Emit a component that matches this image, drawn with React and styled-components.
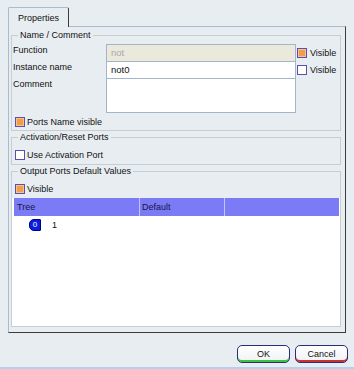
import React from "react";
import styled, { createGlobalStyle } from "styled-components";

const GlobalStyle = createGlobalStyle`
  html, body {
    margin: 0;
    padding: 0;
    background: #e8edf1;
  }
  body {
    font-family: "Liberation Sans", Arial, sans-serif;
    font-size: 9px;
    color: #111;
  }
  * {
    box-sizing: border-box;
  }
`;

const Window = styled.div`
  width: 354px;
  height: 369px;
  display: flex;
  flex-direction: column;
  background: #e8edf1;
  border-bottom: 2px solid #b5d0ee;
`;

const TabBar = styled.div`
  display: flex;
  padding: 7px 0 0 8px;
`;

const Tab = styled.div`
  position: relative;
  z-index: 1;
  width: 61px;
  height: 20px;
  margin-bottom: -1px;
  border: 1px solid #a9bccf;
  border-right-color: #3c3c3c;
  border-bottom: none;
  border-radius: 2px 2px 0 0;
  background: #e8edf1;
  display: flex;
  align-items: center;
  justify-content: center;
  padding-top: 1px;
`;

const Panel = styled.div`
  margin-left: 8px;
  width: 338px;
  height: 307px;
  border: 1px solid;
  border-color: #a9bccf #3c3c3c #3c3c3c #a9bccf;
  padding: 2px 4px 5px 2px;
  display: flex;
  flex-direction: column;
`;

const Group = styled.fieldset`
  margin: 0;
  padding: ${(p) => p.$pad};
  border: 1px solid #c6ced4;
  min-width: 0;
  flex: ${(p) => (p.$grow ? 1 : "none")};
`;

const Legend = styled.legend`
  margin-left: 6px;
  padding: 0 2px;
  line-height: 12px;
`;

const FieldRow = styled.div`
  display: grid;
  grid-template-columns: 93px 190px auto;
  height: ${(p) => p.$h}px;
  margin-top: ${(p) => (p.$first ? 0 : -1)}px;
  padding-left: 1px;
`;

const Label = styled.span`
  line-height: 13px;
`;

const Input = styled.div`
  border: 1px solid #a3b6c9;
  background: ${(p) => (p.$disabled ? "#ebe8dc" : "#ffffff")};
  color: ${(p) => (p.$disabled ? "#a9a9a9" : "#111")};
  padding: 2px 0 0 4px;
  line-height: 12px;
  font-size: 9.5px;
`;

const Side = styled.div`
  display: flex;
  align-items: center;
  gap: 3px;
  padding-left: 1px;
`;

const CheckRow = styled.div`
  display: flex;
  align-items: center;
  gap: 2px;
  height: 16px;
  padding-left: 3px;
  margin-top: ${(p) => p.$mt || 0}px;
`;

const Box = styled.span`
  width: 10px;
  height: 10px;
  flex: none;
  border: 1px solid #5a4fb2;
  background: ${(p) => (p.$on ? "#f29d4b" : "#ffffff")};
  box-shadow: ${(p) => (p.$on ? "inset 0 0 0 1px #f6c38f" : "none")};
`;

const TreeView = styled.div`
  height: 128px;
  margin-top: 1px;
  background: #ffffff;
  padding: 0 1px 0 2px;
`;

const Header = styled.div`
  display: grid;
  grid-template-columns: 125px 85px 1fr;
  height: 18px;
  background: #7b7bf5;
`;

const HeadCell = styled.div`
  display: flex;
  align-items: center;
  padding-left: ${(p) => (p.$first ? 3 : 2)}px;
  border-left: ${(p) => (p.$first ? "none" : "1px solid #c4c4fb")};
  color: #15154a;
`;

const TreeRow = styled.div`
  display: flex;
  align-items: center;
  gap: 11px;
  padding: 3px 0 0 15px;
`;

const NodeIcon = styled.span`
  width: 12px;
  height: 12px;
  border: 1px solid #000070;
  border-radius: 5px 1px 1px 5px;
  background: #0a1ee0;
  color: #ffffff;
  font-size: 8px;
  line-height: 10px;
  text-align: center;
`;

const Footer = styled.div`
  display: flex;
  justify-content: flex-end;
  gap: 5px;
  padding: 12px 6px 0 0;
`;

const Button = styled.button`
  width: 53px;
  height: 18px;
  padding: 0;
  border: 1px solid #2c2c78;
  border-radius: 5px;
  background: linear-gradient(#ffffff, #f0f2f6);
  box-shadow: inset 0 -2px 0 ${(p) => p.$accent};
  font-family: "Liberation Sans", Arial, sans-serif;
  font-size: 9px;
  color: #111;
`;

export default function App() {
  return (
    <>
      <GlobalStyle />
      <Window>
        <TabBar>
          <Tab>Properties</Tab>
        </TabBar>
        <Panel>
          <Group $pad="3px 0 0 0">
            <Legend>Name / Comment</Legend>
            <FieldRow $h={18} $first>
              <Label>Function</Label>
              <Input $disabled>not</Input>
              <Side>
                <Box $on />
                Visible
              </Side>
            </FieldRow>
            <FieldRow $h={18}>
              <Label>Instance name</Label>
              <Input>not0</Input>
              <Side>
                <Box />
                Visible
              </Side>
            </FieldRow>
            <FieldRow $h={35}>
              <Label>Comment</Label>
              <Input />
            </FieldRow>
            <CheckRow $mt={1}>
              <Box $on />
              Ports Name visible
            </CheckRow>
          </Group>
          <Group $pad="4px 0 1px 0">
            <Legend>Activation/Reset Ports</Legend>
            <CheckRow>
              <Box />
              Use Activation Port
            </CheckRow>
          </Group>
          <Group $pad="4px 0 0 0" $grow>
            <Legend>Output Ports Default Values</Legend>
            <CheckRow>
              <Box $on />
              Visible
            </CheckRow>
            <TreeView>
              <Header>
                <HeadCell $first>Tree</HeadCell>
                <HeadCell>Default</HeadCell>
                <HeadCell />
              </Header>
              <TreeRow>
                <NodeIcon>0</NodeIcon>
                <span>1</span>
              </TreeRow>
            </TreeView>
          </Group>
        </Panel>
        <Footer>
          <Button $accent="#3cc43c">OK</Button>
          <Button $accent="#c83434">Cancel</Button>
        </Footer>
      </Window>
    </>
  );
}
